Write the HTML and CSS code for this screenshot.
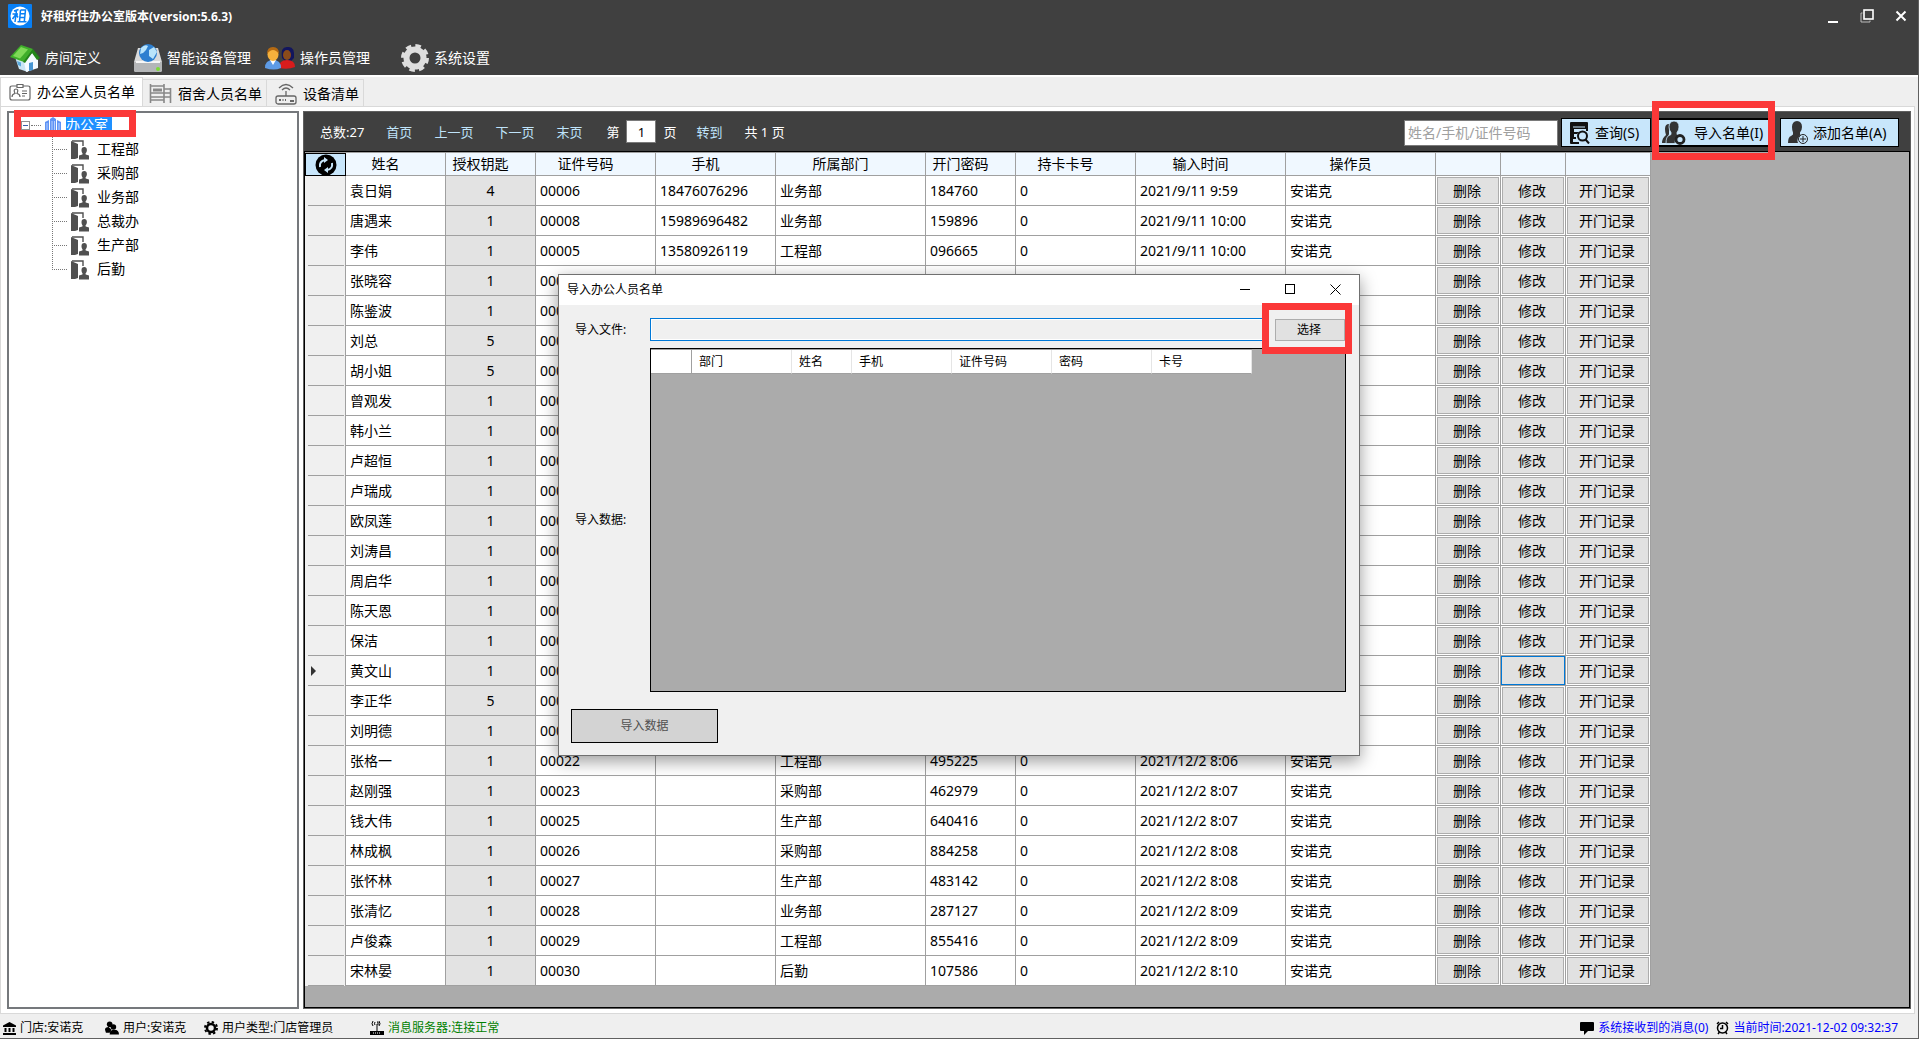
FILE: index.html
```html
<!DOCTYPE html>
<html lang="zh-CN">
<head>
<meta charset="utf-8">
<title>好租好住办公室版本</title>
<link rel="stylesheet" href="styles.css">
</head>
<body>
<svg class="defs" aria-hidden="true">
  <symbol id="door" viewBox="0 0 20 20">
    <path d="M1 1l7 3v14l-3 1H1z" fill="#505050"/><path d="M2 1h11v5" fill="none" stroke="#505050" stroke-width="1.4"/>
    <path d="M11.500 10a2.700 3 0 0 1 5.400 0c0 1.600-.6 2.800-1.400 3.400l.2 1.200 3.300.8V19.500h-10v-4l3.400-1 .2-1.100c-.7-.6-1.100-1.800-1.100-3.300z" fill="#505050"/>
  </symbol>
</svg>

<header class="appbar">
  <div class="titlebar">
    <svg class="logo" viewBox="0 0 24 24"><rect width="24" height="24" rx="1" fill="#087ff5"/><circle cx="12" cy="12" r="9.500" fill="#fff"/><path d="M10.500 5.500L6 7M8.500 6.500L7 18M4.500 10h5.500M7.500 11l-3 4M8.500 11l1.500 2.500M12.500 6h5l-1.200 11.500M12.500 6l-1 11.500M12 9.800h5M11.600 13.500h5M9.500 17.800h9" fill="none" stroke="#087ff5" stroke-width="1.500"/></svg>
    <h1>好租好住办公室版本(version:5.6.3)</h1>
    <div class="win-buttons">
      <button aria-label="最小化"><svg width="14" height="14" viewBox="0 0 14 14"><path d="M2 13h10" stroke="#fff" stroke-width="2"/></svg></button>
      <button aria-label="还原"><svg width="14" height="14" viewBox="0 0 14 14"><path d="M2.500 4H1v9h9v-1.500" fill="none" stroke="#bbb"/><rect x="4" y="1" width="9" height="9" fill="none" stroke="#fff" stroke-width="1.600"/></svg></button>
      <button aria-label="关闭"><svg width="14" height="14" viewBox="0 0 14 14"><path d="M2.500 2.500l9 9M11.500 2.500l-9 9" stroke="#fff" stroke-width="2"/></svg></button>
    </div>
  </div>
  <nav class="menu">
    <button class="m-room">
      <svg width="30" height="28" viewBox="0 0 30 28"><path d="M5 13l4 12 9 3V15L10 8z" fill="#c8e4f5"/><path d="M14 18l9-10 5 8v8l-12 4z" fill="#f4faff"/><path d="M0 13L11 1l12 4-9 13z" fill="#3fae2a"/><path d="M3 12l8-9 7 2.500-8 9z" fill="#7ed957"/><path d="M23 5l7 9-3 2-5-7-7 10-2-1z" fill="#23851a"/><path d="M19 19l4-1v8l-4 1z" fill="#4795d2"/><path d="M7 17l4 1.500v4L8 21z" fill="#5aa9dc"/></svg>
      <span>房间定义</span></button>
    <button class="m-device">
      <svg width="28" height="28" viewBox="0 0 28 28"><path d="M4 4h20l4 14v8q0 2-2 2H2q-2 0-2-2v-8z" fill="#d9dadb"/><path d="M0 18h28v8q0 2-2 2H2q-2 0-2-2z" fill="#b4b6b8"/><path d="M2 18h24" stroke="#f6f6f6" stroke-width="2"/><circle cx="14" cy="9" r="9" fill="#2d7fd0"/><path d="M7 4q4-4 7-2l-2 4-3 3-3 1zM15 6l5-3 3 5-4 7-4-3z" fill="#b9e4fb"/><circle cx="24" cy="25" r="2" fill="#7bdc35"/></svg>
      <span>智能设备管理</span></button>
    <button class="m-user">
      <svg width="30" height="24" viewBox="0 0 30 24"><path d="M17 12q-2-12 6-11 7-1 6 11l-3 3h-6z" fill="#12155e"/><ellipse cx="22" cy="9" rx="4" ry="5" fill="#8a4b1b"/><path d="M14 22q0-8 8-8t8 7q-7 3-16 1z" fill="#d91c1c"/><path d="M0 22q0-8 8-8t8 8q-7 3-16 0z" fill="#5e9be6"/><path d="M5 14l3 5 3-5z" fill="#fff"/><ellipse cx="8" cy="8.500" rx="5.500" ry="6.500" fill="#f6b13c"/><path d="M2 8q0-7 6-7t6 7q-3-4-6-4T2 8z" fill="#b56a12"/></svg>
      <span>操作员管理</span></button>
    <button class="m-set">
      <svg width="28" height="28" viewBox="0 0 28 28"><circle cx="14" cy="14" r="8.500" fill="none" stroke="#dedede" stroke-width="6"/><circle cx="14" cy="14" r="12" fill="none" stroke="#dedede" stroke-width="4" stroke-dasharray="5.400 4.025"/></svg>
      <span>系统设置</span></button>
  </nav>
</header>

<div class="tabs" role="tablist">
  <button class="tab active" role="tab" aria-selected="true">
    <svg width="22" height="18" viewBox="0 0 22 18" fill="none" stroke="#666" stroke-width="1.200"><path d="M8 3H3Q1 3 1 5v10q0 2 2 2h16q2 0 2-2V5q0-2-2-2h-5"/><path d="M8 1.500h6v3H8zM13 8h5M13 10.500h5M13 13h3M3 14q0-3 3-3.500Q4 6 7 6t1 4.500q3 .5 3 3.500"/></svg>
    <span>办公室人员名单</span></button>
  <button class="tab" role="tab">
    <svg width="23" height="20" viewBox="0 0 23 20" fill="none" stroke="#888" stroke-width="1.600"><path d="M1.500 0v19M15 0v19M21.500 4v15M1 2h14M1 9h14M1 13h14M1 16h14M15 5h7M15 9h7M15 13h7"/><path d="M4 6h9" stroke-width="3"/></svg>
    <span>宿舍人员名单</span></button>
  <button class="tab" role="tab">
    <svg width="22" height="22" viewBox="0 0 22 22" fill="none" stroke="#666" stroke-width="1.300"><path d="M4 5q7-7 14 0M7 7q4-4 8 0M11 8v5"/><rect x="1" y="13" width="20" height="8" rx="2"/><path d="M4 17h2M7.500 17h1M10 17h1M15 18h4" stroke-width="2"/></svg>
    <span>设备清单</span></button>
</div>

<main class="page">
  <aside class="tree">
    <div class="root">
      <button class="toggle" aria-label="折叠"></button><i class="dots"></i>
      <svg width="16" height="17" viewBox="0 0 16 17"><path d="M0 5l4-2v14H0zM5 2l3-2 3 2v15H5zM12 3l4 2v12h-4z" fill="#5f93f5"/><path d="M2 6v10M7 4v12M9.500 4v12M14 6v10" stroke="#cfe0ff" stroke-width=".8"/></svg>
      <a href="#" class="selected">办公室</a>
      <span class="mark mark-root"></span>
    </div>
    <ul>
      <li><svg><use href="#door"/></svg><a href="#">工程部</a></li>
      <li><svg><use href="#door"/></svg><a href="#">采购部</a></li>
      <li><svg><use href="#door"/></svg><a href="#">业务部</a></li>
      <li><svg><use href="#door"/></svg><a href="#">总裁办</a></li>
      <li><svg><use href="#door"/></svg><a href="#">生产部</a></li>
      <li><svg><use href="#door"/></svg><a href="#">后勤</a></li>
    </ul>
  </aside>

  <section class="list">
    <div class="toolbar">
      <div class="pager">
        <span>总数:27</span>
        <a href="#">首页</a><a href="#">上一页</a><a href="#">下一页</a><a href="#">末页</a>
        <label>第 <input type="text" value="1"> 页</label>
        <a href="#">转到</a><span>共 1 页</span>
      </div>
      <div class="actions">
        <input class="search" type="text" placeholder="姓名/手机/证件号码" aria-label="姓名/手机/证件号码">
        <button class="act query">
          <svg width="20" height="22" viewBox="0 0 20 22"><path d="M1 0h16q1 0 1 1v8h-2V7H4v3h5l-2 2H4v3h2v2H3v3h6v2H1q-1 0-1-1V1q0-1 1-1z" fill="#111"/><path d="M3 5h12" stroke="#c8e6fb"/><circle cx="12.500" cy="14" r="4.500" fill="#c8e6fb" stroke="#111" stroke-width="2"/><path d="M15.500 17.500l3.500 4" stroke="#111" stroke-width="2"/></svg>
          <span>查询(S)</span></button>
        <button class="act import">
          <svg width="24" height="24" viewBox="0 0 24 24"><path d="M3 8q0-5 4-5v10l-3 9H0q0-5 4-8-1-3-1-6z" fill="#333"/><path d="M7 6q0-5.500 5-6 5 .5 5 6 0 3-2 5.500v2l2 1q-5 3-4 8H4q0-7 3-8l2-1v-2Q7 9 7 6z" fill="#333" stroke="#c8e6fb" stroke-width=".8"/><circle cx="18" cy="18.500" r="4" fill="#c8e6fb" stroke="#222" stroke-width="2.800"/></svg>
          <span>导入名单(I)</span><i class="mark mark-import"></i></button>
        <button class="act add">
          <svg width="20" height="24" viewBox="0 0 20 24"><path d="M4 6q0-5.500 5-6 5 .5 5 6 0 3-2 5.500v2l1 .5q-5 3-3 8H0q0-6 3-7l2-1.500v-2Q4 9 4 6z" fill="#333"/><circle cx="15" cy="18" r="4.500" fill="#c8e6fb" stroke="#222"/><path d="M15 15v6M12 18h6" stroke="#222"/></svg>
          <span>添加名单(A)</span></button>
      </div>
    </div>
    <div class="gridbox">
      <table class="grid">
        <colgroup><col class="w41"><col class="w100"><col class="w90"><col class="w120"><col class="w120"><col class="w150"><col class="w90"><col class="w120"><col class="w150"><col class="w150"><col class="w65"><col class="w65"><col class="w85"></colgroup>
        <thead><tr>
          <th class="refresh"><button aria-label="刷新"><svg width="22" height="22" viewBox="0 0 22 22"><circle cx="11" cy="11" r="10.500" fill="#000"/><path d="M5 13q-1-6 5-7M17 9q1 6-5 7" fill="none" stroke="#c8e6fb" stroke-width="2"/><path d="M9 3l4 3-4 3zM13 13l-4 3 4 3z" fill="#c8e6fb"/></svg></button></th>
          <th>姓名</th><th>授权钥匙</th><th>证件号码</th><th>手机</th><th>所属部门</th><th>开门密码</th><th>持卡卡号</th><th>输入时间</th><th>操作员</th><th></th><th></th><th></th>
        </tr></thead>
        <tbody id="rows"></tbody>
      </table>
    </div>
  </section>
</main>

<footer class="status">
  <span class="s-shop"><svg width="13" height="13" viewBox="0 0 13 13"><path d="M6.500 0L13 3.500V5H0V3.500zM1.500 6h2v4h-2zM5.500 6h2v4h-2zM9.500 6h2v4h-2zM0 11h13v2H0z"/></svg>门店:安诺克</span>
  <span class="s-user"><svg width="14" height="14" viewBox="0 0 15 14"><circle cx="5" cy="3" r="3"/><circle cx="9" cy="6" r="3"/><path d="M0 9q0-3 4-3l3 3-2 3H1zM5 14q0-5 5-5t5 5z"/></svg>用户:安诺克</span>
  <span class="s-type"><svg width="14" height="14" viewBox="0 0 14 14" fill="none" stroke="#000"><circle cx="7" cy="7" r="4" stroke-width="2.500"/><circle cx="7" cy="7" r="6" stroke-width="2" stroke-dasharray="2.400 2.312"/></svg>用户类型:门店管理员</span>
  <span class="s-server"><svg width="14" height="14" viewBox="0 0 14 14"><path d="M0 10h14v4H0z"/><path d="M3 0q-2 3 0 5M9 0q2 3 0 5M7 3v7M5 1q-1 2 0 3M7 1h1v3" fill="none" stroke="#000"/><path d="M3 12h8" stroke="#fff" stroke-dasharray="1 1"/></svg>消息服务器:连接正常</span>
  <span class="s-msg"><svg width="14" height="13" viewBox="0 0 14 13"><path d="M1 0h12q1 0 1 1v7q0 1-1 1H8l-4 4V9H1Q0 9 0 8V1q0-1 1-1z"/></svg>系统接收到的消息(0)</span>
  <span class="s-time"><svg width="13" height="14" viewBox="0 0 13 14" fill="none" stroke="#000" stroke-width="1.500"><circle cx="6.500" cy="7" r="5"/><path d="M6.500 4v3.500H4M1 3l2-2M12 3l-2-2M2 13l1.500-2M11 13l-1.500-2"/></svg>当前时间:2021-12-02 09:32:37</span>
</footer>

<div class="dialog" role="dialog" aria-labelledby="dlg-title">
  <div class="dlg-bar">
    <h2 id="dlg-title">导入办公人员名单</h2>
    <button aria-label="最小化"><svg width="11" height="11" viewBox="0 0 11 11"><path d="M0 5.500h10" stroke="#000"/></svg></button>
    <button aria-label="最大化"><svg width="11" height="11" viewBox="0 0 11 11"><rect x=".5" y=".5" width="9" height="9" fill="none" stroke="#000"/></svg></button>
    <button aria-label="关闭"><svg width="11" height="11" viewBox="0 0 11 11"><path d="M.5.500l10 10M10.500.500l-10 10" stroke="#000"/></svg></button>
  </div>
  <div class="dlg-body">
    <label for="file">导入文件:</label>
    <div class="filerow"><input id="file" type="text" readonly><button class="pick">选择<i class="mark mark-pick"></i></button></div>
    <span class="lbl-data">导入数据:</span>
    <div class="preview">
      <table>
        <colgroup><col class="w41"><col class="w100"><col class="w60"><col class="w100"><col class="w100"><col class="w100"><col class="w100"></colgroup>
        <thead><tr><th></th><th>部门</th><th>姓名</th><th>手机</th><th>证件号码</th><th>密码</th><th>卡号</th></tr></thead>
      </table>
    </div>
    <button class="do-import" disabled>导入数据</button>
  </div>
</div>
<script src="rows.js"></script>
</body>
</html>
```

FILE: styles.css
```css
* { box-sizing: border-box; }
body {
  margin: 0;
  min-height: 100vh;
  display: flex;
  flex-direction: column;
  position: relative;
  background: #efefef;
  color: #000;
  border-right: 1px solid #606060;
  border-bottom: 1px solid #606060;
  font: 14px/20px "Noto Sans", "Noto Sans CJK SC", sans-serif;
}
button, input { font: inherit; color: inherit; margin: 0; padding: 0; }
button { border: 0; background: none; white-space: nowrap; }
a { color: inherit; text-decoration: none; }
svg { flex: none; display: block; }
.defs { position: absolute; width: 0; height: 0; }
.mark { position: absolute; border: 7px solid #fb3838; }

/* title and menu */
.appbar { height: 75px; background: #404040; color: #fff; }
.titlebar { display: flex; align-items: center; height: 32px; padding: 0 10px 0 8px; }
.logo { width: 24px; height: 24px; }
.titlebar h1 { margin: 2px 0 0 9px; font-size: 12px; font-weight: 700; flex: 1; }
.win-buttons { display: flex; gap: 20px; }
.menu { display: flex; height: 43px; padding-left: 10px; }
.menu button { display: flex; align-items: center; gap: 5px; height: 30px; margin-top: 11px; }
.m-room { width: 124px; }
.m-device { width: 131px; }
.m-user { width: 136px; }

/* tabs */
.tabs { display: flex; align-items: flex-end; height: 31px; border-top: 2px solid #fff; }
.tab {
  display: flex; align-items: center; gap: 6px;
  height: 27px; padding: 2px 4px 0 6px;
  border: 1px solid #d9d9d9; border-left: 0; border-bottom: 0;
}
.tab:last-child { padding-left: 8px; }
.tab.active { height: 29px; padding: 0 7px 0 8px; background: #fff; border-left: 1px solid #d9d9d9; }

/* page */
.page {
  flex: 1;
  display: grid;
  grid-template-columns: 292px minmax(0, 1fr);
  gap: 4px;
  margin-right: 3px;
  padding: 4px 3px 4px 6px;
  border: 1px solid #d9d9d9;
  background: #fff;
}
.tree { border: 2px solid #75787c; background: #fff; }
.tree .root { position: relative; display: flex; align-items: center; height: 24px; padding-left: 12px; }
.toggle {
  width: 9px; height: 9px; border: 1px solid #919191;
  background: linear-gradient(#3b5fa8, #3b5fa8) center / 5px 1px no-repeat;
}
.dots { width: 10px; margin: 0 4px 0 1px; border-top: 1px dotted #777; }
.selected { margin-left: 5px; padding-right: 4px; background: #1e90ff; color: #fff; }
.mark-root { left: 5px; top: -3px; width: 122px; height: 27px; }
.tree ul {
  margin: 0 0 0 43px; padding: 0; list-style: none;
  background: repeating-linear-gradient(#777 0 1px, transparent 1px 2px) left top / 1px 134px no-repeat;
}
.tree li { display: flex; align-items: center; height: 24px; }
.tree li::before { content: ""; width: 15px; border-top: 1px dotted #777; }
.tree li svg { width: 20px; height: 20px; margin: 2px 7px 0 3px; }

/* toolbar */
.list { display: flex; flex-direction: column; border: 1px solid #606060; }
.toolbar { display: flex; justify-content: space-between; align-items: center; height: 39px; background: #404040; }
.pager { display: flex; align-items: center; gap: 22px; padding-left: 16px; color: #fff; font-size: 13px; white-space: nowrap; }
.pager a { color: #bfe3fa; }
.pager label { display: flex; align-items: center; gap: 7px; margin: 0 -2px 0 2px; }
.pager input { width: 30px; height: 23px; border: 1px solid #7a7a7a; background: #fff; color: #000; text-align: center; }
.actions { display: flex; align-items: center; gap: 3px; padding: 2px 11px 0 0; }
.search { width: 154px; height: 26px; padding: 0 3px; border: 1px solid #7a7a7a; background: #fff; }
.search::placeholder { color: #a0a0a0; opacity: 1; }
.act { position: relative; display: flex; align-items: center; gap: 5px; height: 29px; padding-left: 8px; border: 1px solid #000; background: #c8e6fb; }
.query { width: 90px; }
.import { width: 120px; gap: 8px; padding-left: 6px; border-width: 2px; }
.mark-import { left: -4px; top: -19px; width: 123px; height: 59px; }
.add { width: 119px; margin-left: 3px; padding-left: 7px; }

/* people table */
.gridbox { flex: 1; border: 1px solid #000; background: #ababab; }
table { table-layout: fixed; border-collapse: separate; border-spacing: 0; width: 0; }
.w41 { width: 41px; }
.w60 { width: 60px; }
.w65 { width: 65px; }
.w85 { width: 85px; }
.w90 { width: 90px; }
.w100 { width: 100px; }
.w120 { width: 120px; }
.w150 { width: 150px; }
.grid { border-top: 1px solid #a0a0a0; }
.grid th, .grid td { padding: 0; border-right: 1px solid #a0a0a0; border-bottom: 1px solid #a0a0a0; white-space: nowrap; }
.grid thead th { height: 23px; padding-right: 20px; background: #f0f8ff; font-weight: 400; }
.grid thead .refresh { padding: 0; border: 1px solid #000; background: #c8e6fb; }
.refresh button { display: flex; justify-content: center; width: 100%; height: 21px; }
.grid td { height: 30px; padding: 1px 4px 0 4px; background: #fff; }
.grid tbody th {
  border-bottom: 0; padding-left: 6px;
  background: linear-gradient(#a0a0a0, #a0a0a0) 3px 100% / 36px 1px no-repeat #f0f0f0;
}
.current::before { content: ""; display: block; width: 0; border: 5px solid transparent; border-left-color: #333; border-right: 0; }
.grid .keys { background: #e3e3e3; text-align: center; }
.grid .op { padding: 1px; }
.op button { display: block; width: 100%; height: 27px; padding-right: 2px; border: 1px solid #adadad; background: #e1e1e1; text-align: center; }
.op button.focused { border-color: #e1e1e1; outline: 1px solid #0078d7; }

/* status bar */
.status { display: flex; align-items: center; height: 24px; padding: 4px 20px 0 3px; font-size: 12px; white-space: nowrap; }
.status span { display: flex; align-items: center; gap: 4px; }
.s-shop { width: 102px; }
.s-user { width: 99px; }
.s-type { width: 166px; }
.s-server { color: #008000; }
.s-msg { margin-left: auto; color: #00f; }
.s-time { margin-left: 8px; color: #00f; }

/* import window */
.dialog {
  position: absolute; left: 558px; top: 274px; width: 802px;
  border: 1px solid #707070; background: #f0f0f0; font-size: 12px;
  box-shadow: 0 5px 16px rgba(0, 0, 0, .4);
}
.dlg-bar { display: flex; align-items: center; gap: 34px; height: 30px; padding: 0 18px 2px 8px; background: #fff; }
.dlg-bar h2 { flex: 1; margin: 2px 0 0; font-size: 12px; font-weight: 400; }
.dlg-body { display: grid; grid-template-columns: 75px 1fr; row-gap: 7px; align-items: center; padding: 13px 13px 12px 16px; }
.filerow { display: flex; align-items: center; gap: 8px; padding-right: 1px; }
.filerow input { flex: 1; min-width: 0; height: 23px; border: 1px solid #0078d7; background: #f0f0f0; box-shadow: inset 0 0 0 1px #fff; outline: 0; }
.pick { position: relative; width: 70px; height: 22px; padding-right: 2px; border: 1px solid #adadad; background: #e1e1e1; }
.mark-pick { left: -14px; top: -17px; width: 90px; height: 51px; }
.preview { height: 344px; border: 1px solid #000; background: #ababab; }
.preview th { height: 24px; padding: 0 7px; border-right: 1px solid #e5e5e5; border-bottom: 1px solid #a0a0a0; background: #fff; font-weight: 400; text-align: left; }
.preview th:first-child { border-right-color: #a0a0a0; }
.preview table { border-top: 1px solid #a0a0a0; }
.dlg-body label, .lbl-data { white-space: nowrap; }
.do-import { grid-column: 1 / 3; width: 147px; height: 34px; margin: 10px 0 0 -4px; border: 1px solid #000; background: #d3d3d3; color: #505050; }
```

FILE: rows.js
```js
// name, keys, id number, phone, department, door code, card, time
const people = [
  ['袁日娟', 4, '00006', '18476076296', '业务部', '184760', '0', '2021/9/11 9:59'],
  ['唐遇来', 1, '00008', '15989696482', '业务部', '159896', '0', '2021/9/11 10:00'],
  ['李伟', 1, '00005', '13580926119', '工程部', '096665', '0', '2021/9/11 10:00'],
  ['张晓容', 1, '000'], ['陈鉴波', 1, '000'], ['刘总', 5, '000'], ['胡小姐', 5, '000'],
  ['曾观发', 1, '000'], ['韩小兰', 1, '000'], ['卢超恒', 1, '000'], ['卢瑞成', 1, '000'],
  ['欧凤莲', 1, '000'], ['刘涛昌', 1, '000'], ['周启华', 1, '000'], ['陈天恩', 1, '000'],
  ['保洁', 1, '000'], ['黄文山', 1, '000'], ['李正华', 5, '000'], ['刘明德', 1, '000'],
  ['张格一', 1, '00022', '', '工程部', '495225', '0', '2021/12/2 8:06'],
  ['赵刚强', 1, '00023', '', '采购部', '462979', '0', '2021/12/2 8:07'],
  ['钱大伟', 1, '00025', '', '生产部', '640416', '0', '2021/12/2 8:07'],
  ['林成枫', 1, '00026', '', '采购部', '884258', '0', '2021/12/2 8:08'],
  ['张怀林', 1, '00027', '', '生产部', '483142', '0', '2021/12/2 8:08'],
  ['张清忆', 1, '00028', '', '业务部', '287127', '0', '2021/12/2 8:09'],
  ['卢俊森', 1, '00029', '', '工程部', '855416', '0', '2021/12/2 8:09'],
  ['宋林晏', 1, '00030', '', '后勤', '107586', '0', '2021/12/2 8:10']
];
const currentName = '黄文山';

document.getElementById('rows').innerHTML = people.map(p => {
  const current = p[0] === currentName;
  const complete = p.length > 3;
  const cells = Array.from({ length: 8 }, (_, i) =>
    `<td${i === 1 ? ' class="keys"' : ''}>${p[i] ?? ''}</td>`).join('');
  return `<tr><th${current ? ' class="current"' : ''}></th>${cells}<td>${complete ? '安诺克' : ''}</td>` +
    `<td class="op"><button>删除</button></td>` +
    `<td class="op"><button${current ? ' class="focused"' : ''}>修改</button></td>` +
    `<td class="op"><button>开门记录</button></td></tr>`;
}).join('');
```
